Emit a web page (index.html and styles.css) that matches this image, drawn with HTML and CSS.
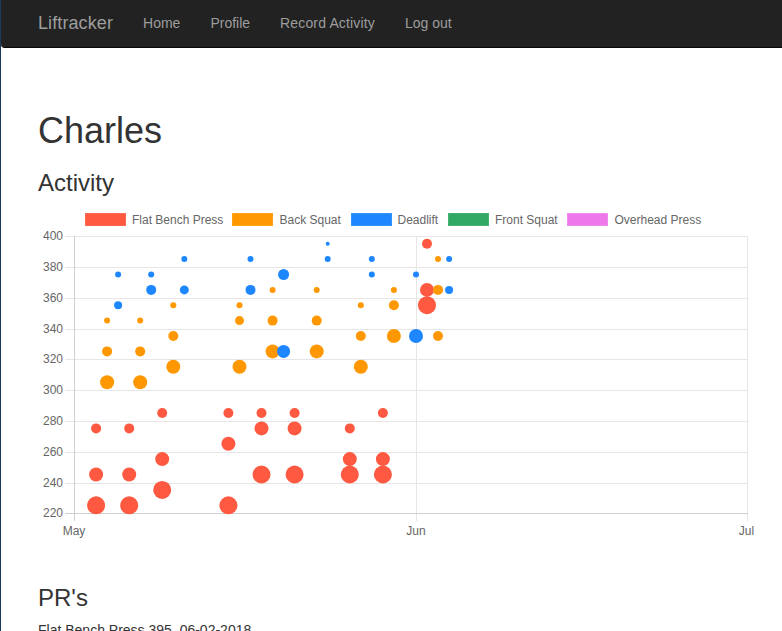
FILE: index.html
```html
<!DOCTYPE html>
<html lang="en">
<head>
<meta charset="utf-8">
<title>Liftracker</title>
<link rel="stylesheet" href="styles.css">
</head>
<body>
<nav class="navbar">
  <a class="brand" href="#">Liftracker</a>
  <ul class="nav">
    <li><a href="#">Home</a></li>
    <li><a href="#">Profile</a></li>
    <li><a class="wide" href="#">Record Activity</a></li>
    <li><a href="#">Log out</a></li>
  </ul>
</nav>
<main class="container">
  <h1 class="title">Charles</h1>
  <h3 class="section first">Activity</h3>
  <svg class="chart" width="744" height="345" viewBox="38 200 744 345" xmlns="http://www.w3.org/2000/svg">
    <g class="legend">
      <rect x="85.5" y="213.5" width="40" height="12" fill="#ff5a41" stroke="#ff6a54"/>
      <text x="132" y="224">Flat Bench Press</text>
      <rect x="232.5" y="213.5" width="40" height="12" fill="#ff9800" stroke="#ffa31a"/>
      <text x="279.5" y="224">Back Squat</text>
      <rect x="351.5" y="213.5" width="40" height="12" fill="#1e87ff" stroke="#3393ff"/>
      <text x="397.5" y="224">Deadlift</text>
      <rect x="448.5" y="213.5" width="40" height="12" fill="#32a865" stroke="#45b173"/>
      <text x="495" y="224">Front Squat</text>
      <rect x="567.5" y="213.5" width="40" height="12" fill="#ee77ea" stroke="#f08aec"/>
      <text x="614.5" y="224">Overhead Press</text>
    </g>
    <g class="grid">
      <line x1="65" y1="236.5" x2="748" y2="236.5"/>
      <line x1="65" y1="267.5" x2="748" y2="267.5"/>
      <line x1="65" y1="298.5" x2="748" y2="298.5"/>
      <line x1="65" y1="329.5" x2="748" y2="329.5"/>
      <line x1="65" y1="359.5" x2="748" y2="359.5"/>
      <line x1="65" y1="390.5" x2="748" y2="390.5"/>
      <line x1="65" y1="421.5" x2="748" y2="421.5"/>
      <line x1="65" y1="452.5" x2="748" y2="452.5"/>
      <line x1="65" y1="483.5" x2="748" y2="483.5"/>
      <line x1="416.5" y1="236" x2="416.5" y2="521"/>
      <line x1="747.5" y1="236" x2="747.5" y2="521"/>
    </g>
    <g class="axis">
      <line x1="74.5" y1="236" x2="74.5" y2="521"/>
      <line x1="65" y1="513.5" x2="748" y2="513.5"/>
    </g>
    <g class="ylabels">
      <text x="63" y="240">400</text>
      <text x="63" y="271">380</text>
      <text x="63" y="302">360</text>
      <text x="63" y="333">340</text>
      <text x="63" y="363">320</text>
      <text x="63" y="394">300</text>
      <text x="63" y="425">280</text>
      <text x="63" y="456">260</text>
      <text x="63" y="487">240</text>
      <text x="63" y="517">220</text>
    </g>
    <g class="xlabels">
      <text x="74" y="535">May</text>
      <text x="416" y="535">Jun</text>
      <text x="746.5" y="535">Jul</text>
    </g>
    <g class="bench">
      <circle cx="96.1" cy="428.4" r="5"/><circle cx="96.1" cy="474.5" r="7"/><circle cx="96.1" cy="505.3" r="9"/>
      <circle cx="129.2" cy="428.4" r="5"/><circle cx="129.2" cy="474.5" r="7"/><circle cx="129.2" cy="505.3" r="9"/>
      <circle cx="162.2" cy="413" r="5"/><circle cx="162.2" cy="459.1" r="7"/><circle cx="162.2" cy="489.9" r="9"/>
      <circle cx="228.4" cy="413" r="5"/><circle cx="228.4" cy="443.8" r="7"/><circle cx="228.4" cy="505.3" r="9"/>
      <circle cx="261.5" cy="413" r="5"/><circle cx="261.5" cy="428.4" r="7"/><circle cx="261.5" cy="474.5" r="9"/>
      <circle cx="294.6" cy="413" r="5"/><circle cx="294.6" cy="428.4" r="7"/><circle cx="294.6" cy="474.5" r="9"/>
      <circle cx="349.8" cy="428.4" r="5"/><circle cx="349.8" cy="459.1" r="7"/><circle cx="349.8" cy="474.5" r="9"/>
      <circle cx="382.9" cy="413" r="5"/><circle cx="382.9" cy="459.1" r="7"/><circle cx="382.9" cy="474.5" r="9"/>
      <circle cx="427" cy="243.7" r="5"/><circle cx="427" cy="289.9" r="7"/><circle cx="427" cy="305.2" r="9"/>
    </g>
    <g class="squat">
      <circle cx="107.1" cy="320.6" r="3"/><circle cx="107.1" cy="351.4" r="5"/><circle cx="107.1" cy="382.2" r="7"/>
      <circle cx="140.2" cy="320.6" r="3"/><circle cx="140.2" cy="351.4" r="5"/><circle cx="140.2" cy="382.2" r="7"/>
      <circle cx="173.3" cy="305.2" r="3"/><circle cx="173.3" cy="336" r="5"/><circle cx="173.3" cy="366.8" r="7"/>
      <circle cx="239.5" cy="305.2" r="3"/><circle cx="239.5" cy="320.6" r="4.5"/><circle cx="239.5" cy="366.8" r="7"/>
      <circle cx="272.6" cy="289.9" r="3"/><circle cx="272.6" cy="320.6" r="5"/><circle cx="272.6" cy="351.4" r="7"/>
      <circle cx="316.7" cy="289.9" r="3"/><circle cx="316.7" cy="320.6" r="5"/><circle cx="316.7" cy="351.4" r="7"/>
      <circle cx="360.8" cy="305.2" r="3"/><circle cx="360.8" cy="336" r="5"/><circle cx="360.8" cy="366.8" r="7"/>
      <circle cx="393.9" cy="289.9" r="3"/><circle cx="393.9" cy="305.2" r="5"/><circle cx="393.9" cy="336" r="7"/>
      <circle cx="438" cy="259.1" r="3"/><circle cx="438" cy="289.9" r="5"/><circle cx="438" cy="336" r="5"/>
    </g>
    <g class="dead">
      <circle cx="118.1" cy="274.5" r="3"/><circle cx="118.1" cy="305.2" r="4"/>
      <circle cx="151.2" cy="274.5" r="3"/><circle cx="151.2" cy="289.9" r="5"/>
      <circle cx="184.3" cy="259.1" r="3"/><circle cx="184.3" cy="289.9" r="4.5"/>
      <circle cx="250.5" cy="259.1" r="3"/><circle cx="250.5" cy="289.9" r="5"/>
      <circle cx="283.6" cy="274.5" r="5.5"/><circle cx="283.6" cy="351.4" r="6.5"/>
      <circle cx="327.7" cy="243.7" r="2"/><circle cx="327.7" cy="259.1" r="3"/>
      <circle cx="371.8" cy="259.1" r="3"/><circle cx="371.8" cy="274.5" r="3"/>
      <circle cx="416" cy="274.5" r="3"/><circle cx="416" cy="336" r="7"/>
      <circle cx="449.1" cy="259.1" r="3"/><circle cx="449.1" cy="289.9" r="4"/>
    </g>
  </svg>
  <h3 class="section second">PR's</h3>
  <p class="pr">Flat Bench Press 395, 06-02-2018</p>
</main>
</body>
</html>
```
FILE: styles.css
```css
html, body {
  margin: 0;
  padding: 0;
}
body {
  font-family: "Liberation Sans", Arial, sans-serif;
  font-size: 14px;
  line-height: 1.42857;
  color: #333;
  background: #fff;
  border-left: 1px solid #1d3a5c;
  min-height: 631px;
  box-sizing: border-box;
  overflow: hidden;
}
.navbar {
  display: flex;
  align-items: center;
  height: 47px;
  background: #222;
  border-bottom: 1px solid #080808;
  border-bottom-left-radius: 4px;
  padding-left: 37px;
}
.brand {
  font-size: 18px;
  line-height: normal;
  color: #9d9d9d;
  text-decoration: none;
  padding-right: 15px;
  letter-spacing: 0.1px;
  margin-top: -1px;
}
.nav {
  display: flex;
  list-style: none;
  margin: -1px 0 0;
  padding: 0;
}
.nav a {
  display: block;
  padding: 0 15px;
  font-size: 14px;
  line-height: normal;
  color: #9d9d9d;
  text-decoration: none;
}
.nav a.wide {
  letter-spacing: 0.15px;
}
.container {
  padding-left: 37px;
  padding-top: 63px;
}
.title {
  font-size: 36px;
  font-weight: normal;
  line-height: 1.1;
  margin: 0;
}
.section {
  font-size: 24px;
  font-weight: normal;
  line-height: 1.1;
  margin: 0;
}
.section.first {
  margin-top: 19px;
  margin-bottom: 4px;
}
.section.second {
  margin-top: 40px;
}
.chart {
  display: block;
  font-family: "Liberation Sans", Arial, sans-serif;
  font-size: 12px;
}
.legend text, .ylabels text, .xlabels text {
  fill: #666;
}
.ylabels text {
  text-anchor: end;
}
.xlabels text {
  text-anchor: middle;
}
.grid line {
  stroke: #e6e6e6;
  stroke-width: 1;
}
.axis line {
  stroke: #cfcfcf;
  stroke-width: 1;
}
.bench circle { fill: #ff5a41; }
.squat circle { fill: #ff9800; }
.dead circle { fill: #1e87ff; }
.pr {
  margin: 9px 0 0;
  font-size: 14px;
  line-height: 20px;
}
```
